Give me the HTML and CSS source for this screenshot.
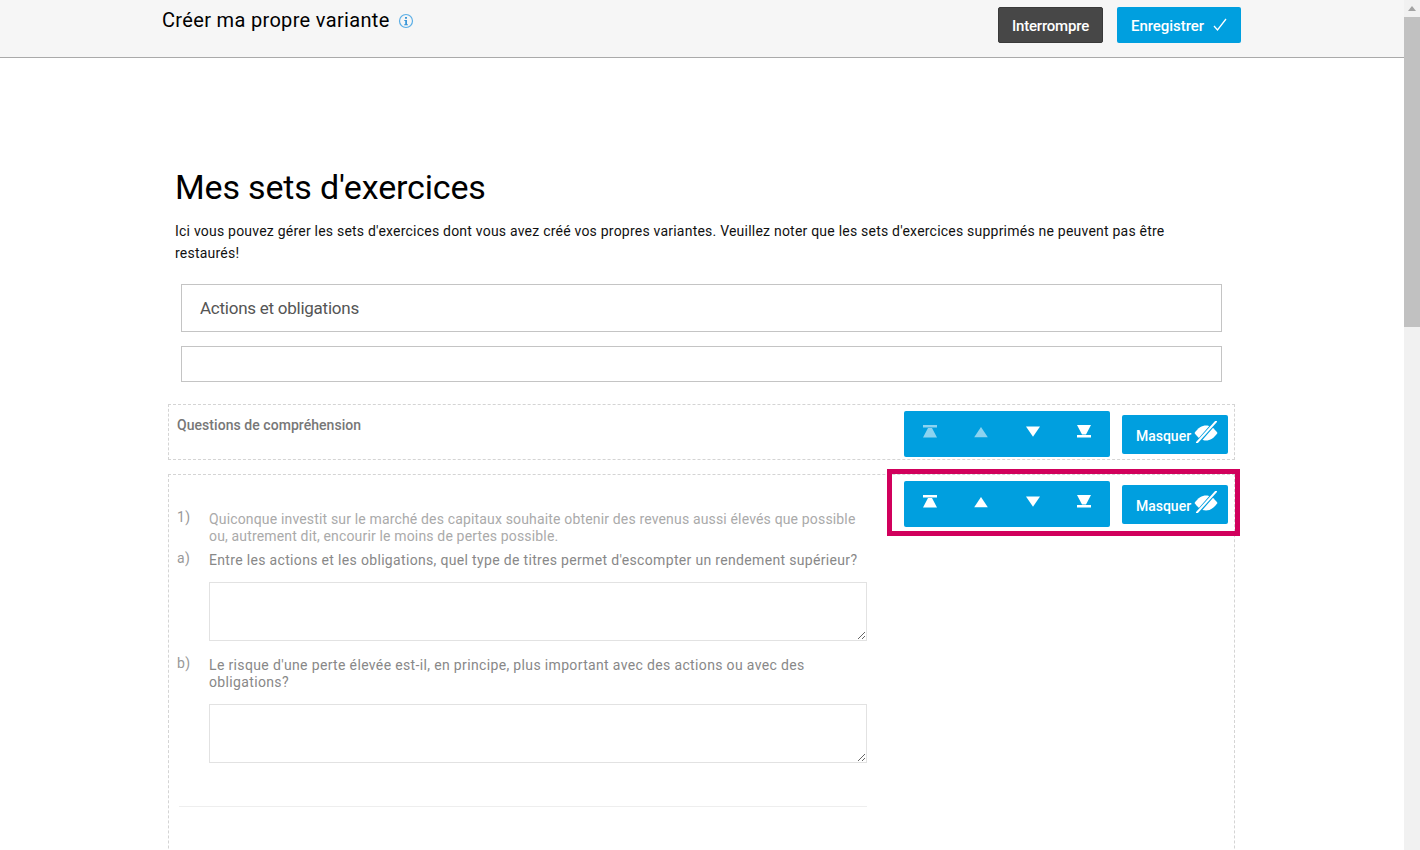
FILE: index.html
```html
<!DOCTYPE html>
<html lang="fr">
<head>
<meta charset="utf-8">
<title>Mes sets d'exercices</title>
<link rel="stylesheet" href="styles.css">
</head>
<body>
<svg class="defs" width="0" height="0" aria-hidden="true">
  <symbol id="i-top" viewBox="0 0 16 14"><path d="M1 0h14v2.600H1zM6 3h4l5 9.500H1z"/></symbol>
  <symbol id="i-up" viewBox="0 0 16 14"><path d="M8 2l6.800 10.200H1.200z"/></symbol>
  <symbol id="i-down" viewBox="0 0 16 14"><path d="M1 1.500h14L8 11.700z"/></symbol>
  <symbol id="i-bottom" viewBox="0 0 16 14"><path d="M1 0h14l-5 9.500H6zM1 9.900h14v2.600H1z"/></symbol>
  <symbol id="i-eye" viewBox="0 0 24 22">
    <path d="M.5 12C4 6.800 8 4.500 12 4.500s8 2.300 11.500 7.500C20 17.200 16 19.500 12 19.500S4 17.200.5 12z" fill="#fff"/>
    <path d="M21.500 1L3.500 21.500" stroke="#009fdf" stroke-width="4"/>
    <path d="M22 .5L3 21.500" stroke="#fff" stroke-width="2" stroke-linecap="round"/>
  </symbol>
</svg>
<div class="window">
  <div class="page">
    <header class="topbar">
      <div class="topbar-inner">
        <div class="topbar-title">
          <span>Créer ma propre variante</span>
          <svg class="info" viewBox="0 0 16 16" aria-hidden="true">
            <circle cx="8" cy="8" r="6.500" fill="none" stroke="#5aaee6" stroke-width="1.200"/>
            <path d="M7 4h2v1.800H7zM6.300 7h2.700v4.200h.9v1H6.200v-1h1V8h-.9z" fill="#3b97d8"/>
          </svg>
        </div>
        <div class="topbar-actions">
          <button class="btn btn-dark" type="button">Interrompre</button>
          <button class="btn btn-blue" type="button">Enregistrer
            <svg class="check" viewBox="0 0 14 14" aria-hidden="true"><path d="M1 8l3.500 4L13 1" fill="none" stroke="#fff" stroke-width="1.300"/></svg>
          </button>
        </div>
      </div>
    </header>
    <main class="content">
      <h1 class="heading">Mes sets d'exercices</h1>
      <p class="intro">Ici vous pouvez gérer les sets d'exercices dont vous avez créé vos propres variantes. Veuillez noter que les sets d'exercices supprimés ne peuvent pas être restaurés!</p>
      <div class="box box-title">Actions et obligations</div>
      <div class="box box-empty"></div>

      <section class="block block-head">
        <div class="block-label">Questions de compréhension</div>
        <div class="controls">
          <div class="group">
            <span class="cell off"><svg><use href="#i-top"/></svg></span>
            <span class="cell off"><svg><use href="#i-up"/></svg></span>
            <span class="cell"><svg><use href="#i-down"/></svg></span>
            <span class="cell"><svg><use href="#i-bottom"/></svg></span>
          </div>
          <button class="hide" type="button"><span>Masquer</span> <svg><use href="#i-eye"/></svg></button>
        </div>
      </section>

      <section class="block block-body">
        <div class="questions">
          <div class="q q-first"><span class="num">1)</span><p class="muted">Quiconque investit sur le marché des capitaux souhaite obtenir des revenus aussi élevés que possible ou, autrement dit, encourir le moins de pertes possible.</p></div>
          <div class="q q-a"><span class="num">a)</span><p>Entre les actions et les obligations, quel type de titres permet d'escompter un rendement supérieur?</p></div>
          <textarea class="answer"></textarea>
          <div class="q q-b"><span class="num">b)</span><p>Le risque d'une perte élevée est-il, en principe, plus important avec des actions ou avec des obligations?</p></div>
          <textarea class="answer"></textarea>
          <hr class="rule">
        </div>
        <div class="controls">
          <div class="group">
            <span class="cell"><svg><use href="#i-top"/></svg></span>
            <span class="cell"><svg><use href="#i-up"/></svg></span>
            <span class="cell"><svg><use href="#i-down"/></svg></span>
            <span class="cell"><svg><use href="#i-bottom"/></svg></span>
          </div>
          <button class="hide" type="button"><span>Masquer</span> <svg><use href="#i-eye"/></svg></button>
        </div>
        <div class="marker"></div>
      </section>
    </main>
  </div>
  <div class="scrollbar">
    <div class="scroll-arrow"></div>
    <div class="scroll-thumb"></div>
  </div>
</div>
</body>
</html>
```

FILE: styles.css
```css
* { box-sizing: border-box; }
html, body { margin: 0; height: 100%; overflow: hidden; }
body { font-family: Roboto, "Liberation Sans", sans-serif; background: #fff; color: #000; }
.defs { position: absolute; }
.window { display: flex; height: 850px; }
.page { flex: 1; min-width: 0; overflow: hidden; }

.scrollbar { width: 16px; flex: none; background: #f1f1f1; display: flex; flex-direction: column; }
.scroll-arrow { height: 17px; flex: none; padding: 6px 4px 0; }
.scroll-arrow::before { content: ""; display: block; width: 8px; height: 5px; background: #a3a3a3; clip-path: polygon(50% 0, 100% 100%, 0 100%); }
.scroll-thumb { height: 310px; flex: none; background: #c1c1c1; }

.topbar { height: 58px; background: #f6f6f6; border-bottom: 1px solid #aaa; }
.topbar-inner { display: flex; justify-content: space-between; margin-left: 162px; width: 1079px; }
.topbar-title { display: flex; align-items: center; gap: 8px; height: 39px; font-size: 20px; letter-spacing: .33px; color: #000; }
.info { width: 16px; height: 16px; margin-top: 3px; }
.topbar-actions { display: flex; gap: 14px; padding-top: 7px; }
.btn { height: 36px; padding: 2px 0 0; border-radius: 2px; font: 500 15px Roboto, sans-serif; letter-spacing: -.06px; color: #fff; display: flex; align-items: center; justify-content: center; }
.btn-dark { width: 105px; background: #474747; border: 1px solid #3a3a3a; letter-spacing: -.2px; }
.btn-blue { width: 124px; background: #009fdf; border: 0; gap: 9px; }
.check { width: 14px; height: 14px; margin-top: -2px; }

.content { width: 1067px; margin-left: 168px; }
.heading { margin: 109px 0 0 7px; font-size: 34px; font-weight: 400; line-height: 40px; letter-spacing: -.15px; }
.intro { margin: 13px 0 0 7px; width: 1010px; font-size: 14px; line-height: 22px; letter-spacing: .22px; color: #111; }
.box { margin-left: 13px; width: 1041px; border: 1px solid #c4c4c4; }
.box-title { margin-top: 20px; height: 48px; padding-left: 18px; font-size: 17px; line-height: 46px; letter-spacing: -.25px; color: #555; }
.box-empty { margin-top: 14px; height: 36px; }

.block { position: relative; border: 1px dashed #d4d4d4; display: flex; justify-content: space-between; }
.block-head { margin-top: 22px; height: 56px; }
.block-label { margin: 12px 0 0 8px; font-size: 14px; font-weight: 500; line-height: 17px; letter-spacing: .05px; color: #777; }
.block-body { margin-top: 14px; height: 500px; }

.controls { display: flex; gap: 12px; align-items: flex-start; padding: 6px 6px 0 0; }
.group { width: 206px; height: 46px; display: flex; background: #009fdf; border-radius: 2px; }
.cell { flex: 1; display: flex; justify-content: center; padding-top: 14px; }
.cell svg { width: 16px; height: 14px; fill: #fff; }
.cell.off svg { opacity: .55; }
.hide { width: 106px; height: 39px; margin-top: 4px; padding: 2px 0 0 4px; border: 0; border-radius: 2px; background: #009fdf; color: #fff; font: 500 14px Roboto, sans-serif; letter-spacing: 0; display: flex; align-items: center; justify-content: center; gap: 3px; }
.hide svg { width: 24px; height: 22px; margin-top: -7px; }

.questions { width: 698px; padding: 36px 0 0 8px; font-size: 14px; line-height: 17px; letter-spacing: .33px; color: #888; }
.q { display: flex; }
.q p { margin: 0; flex: 1; }
.num { width: 32px; flex: none; margin-top: -2px; color: #999; }
.muted { color: #aaa; letter-spacing: .16px; }
.q-a { margin-top: 7px; }
.q-b { margin-top: 16px; letter-spacing: .35px; }
.answer { display: block; width: 658px; height: 59px; margin: 13px 0 0 32px; border: 1px solid #e2e2e2; background: #fff; resize: both; }
.q-b + .answer { margin-top: 13px; }
.rule { margin: 43px 0 0 2px; border: 0; border-top: 1px solid #eee; }

.marker { position: absolute; left: 718px; top: -6px; width: 353px; height: 67px; border: 5px solid #d1005c; pointer-events: none; }
```
